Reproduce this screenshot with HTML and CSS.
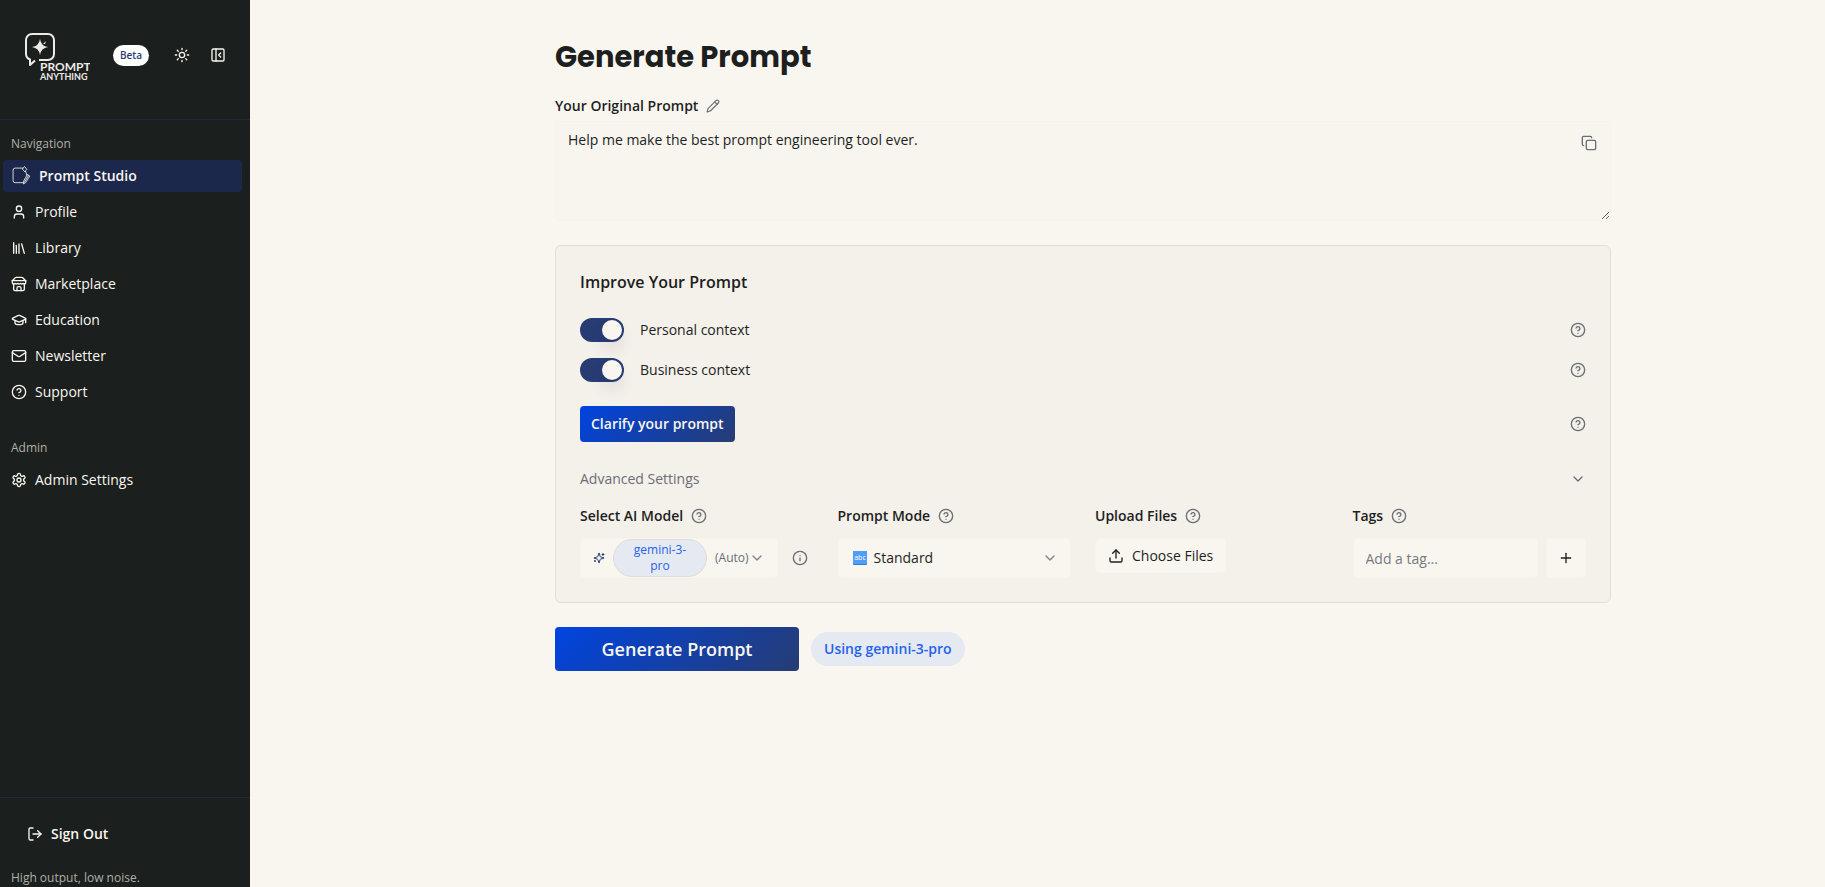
FILE: index.html
```
<!DOCTYPE html>
<html lang="en">

<head>
  <meta charset="utf-8" />
  <meta name="viewport" content="width=device-width, initial-scale=1" />
  <title>Generate Prompt</title>
  <link rel="stylesheet" href="styles.css">
</head>

<body>
  <!-- icon set -->
  <svg class="sprite" aria-hidden="true">
    <symbol id="i-help" viewBox="0 0 24 24"><circle cx="12" cy="12" r="10" /><path d="M9.09 9a3 3 0 0 1 5.83 1c0 2-3 3-3 3" /><path d="M12 17h.01" /></symbol>
    <symbol id="i-info" viewBox="0 0 24 24"><circle cx="12" cy="12" r="10" /><path d="M12 16v-4" /><path d="M12 8h.01" /></symbol>
    <symbol id="i-down" viewBox="0 0 24 24"><path d="m6 9 6 6 6-6" /></symbol>
    <symbol id="i-sun" viewBox="0 0 24 24"><circle cx="12" cy="12" r="4" /><path d="M12 2v2M12 20v2M4.93 4.93l1.41 1.41M17.66 17.66l1.41 1.41M2 12h2M20 12h2M6.34 17.66l-1.41 1.41M19.07 4.93l-1.41 1.41" /></symbol>
    <symbol id="i-panel" viewBox="0 0 24 24"><rect width="18" height="18" x="3" y="3" rx="2" /><path d="M9 3v18" /><path d="m16 15-3-3 3-3" /></symbol>
    <symbol id="i-studio" viewBox="0 0 24 24"><path d="M14 2.500H5a2.500 2.500 0 0 0-2.500 2.500v12.500A2.500 2.500 0 0 0 5 20h9.500" /><path d="m16.500 1 2.500 3-2.500 3-2.500-3z" /><path d="M17.500 6.500 19 11" /><path d="m20 10.500 2.500 1.500-5 8-2.500 1.500.2-3zM21 11.500l-5 8" /></symbol>
    <symbol id="i-user" viewBox="0 0 24 24"><path d="M19 21v-2a4 4 0 0 0-4-4H9a4 4 0 0 0-4 4v2" /><circle cx="12" cy="7" r="4" /></symbol>
    <symbol id="i-library" viewBox="0 0 24 24"><path d="m16 6 4 14" /><path d="M12 6v14" /><path d="M8 8v12" /><path d="M4 4v16" /></symbol>
    <symbol id="i-store" viewBox="0 0 24 24"><path d="m2 7 4.41-4.41A2 2 0 0 1 7.83 2h8.34a2 2 0 0 1 1.42.59L22 7" /><path d="M4 12v8a2 2 0 0 0 2 2h12a2 2 0 0 0 2-2v-8" /><path d="M15 22v-4a2 2 0 0 0-2-2h-2a2 2 0 0 0-2 2v4" /><path d="M2 7h20" /><path d="M22 7v3a2 2 0 0 1-2 2a2.7 2.7 0 0 1-1.59-.63.7.7 0 0 0-.82 0A2.7 2.7 0 0 1 16 12a2.7 2.7 0 0 1-1.59-.63.7.7 0 0 0-.82 0A2.7 2.7 0 0 1 12 12a2.7 2.7 0 0 1-1.59-.63.7.7 0 0 0-.82 0A2.7 2.7 0 0 1 8 12a2.7 2.7 0 0 1-1.59-.63.7.7 0 0 0-.82 0A2.7 2.7 0 0 1 4 12a2 2 0 0 1-2-2V7" /></symbol>
    <symbol id="i-cap" viewBox="0 0 24 24"><path d="M21.42 10.922a1 1 0 0 0-.019-1.838L12.83 5.18a2 2 0 0 0-1.66 0L2.6 9.08a1 1 0 0 0 0 1.832l8.57 3.908a2 2 0 0 0 1.66 0z" /><path d="M22 10v6" /><path d="M6 12.5V16a6 3 0 0 0 12 0v-3.5" /></symbol>
    <symbol id="i-mail" viewBox="0 0 24 24"><rect width="20" height="16" x="2" y="4" rx="2" /><path d="m22 7-8.97 5.7a1.94 1.94 0 0 1-2.06 0L2 7" /></symbol>
    <symbol id="i-gear" viewBox="0 0 24 24"><path d="M12.22 2h-.44a2 2 0 0 0-2 2v.18a2 2 0 0 1-1 1.73l-.43.25a2 2 0 0 1-2 0l-.15-.08a2 2 0 0 0-2.73.73l-.22.38a2 2 0 0 0 .73 2.73l.15.1a2 2 0 0 1 1 1.72v.51a2 2 0 0 1-1 1.74l-.15.09a2 2 0 0 0-.73 2.73l.22.38a2 2 0 0 0 2.73.73l.15-.08a2 2 0 0 1 2 0l.43.25a2 2 0 0 1 1 1.73V20a2 2 0 0 0 2 2h.44a2 2 0 0 0 2-2v-.18a2 2 0 0 1 1-1.73l.43-.25a2 2 0 0 1 2 0l.15.08a2 2 0 0 0 2.73-.73l.22-.39a2 2 0 0 0-.73-2.73l-.15-.08a2 2 0 0 1-1-1.74v-.5a2 2 0 0 1 1-1.74l.15-.09a2 2 0 0 0 .73-2.73l-.22-.38a2 2 0 0 0-2.73-.73l-.15.08a2 2 0 0 1-2 0l-.43-.25a2 2 0 0 1-1-1.73V4a2 2 0 0 0-2-2z" /><circle cx="12" cy="12" r="3" /></symbol>
    <symbol id="i-out" viewBox="0 0 24 24"><path d="M9 21H5a2 2 0 0 1-2-2V5a2 2 0 0 1 2-2h4" /><path d="m16 17 5-5-5-5" /><path d="M21 12H9" /></symbol>
    <symbol id="i-pencil" viewBox="0 0 24 24"><path d="M21.174 6.812a1 1 0 0 0-3.986-3.987L3.842 16.174a2 2 0 0 0-.5.83l-1.321 4.352a.5.5 0 0 0 .623.622l4.353-1.32a2 2 0 0 0 .83-.497z" /><path d="m15 5 4 4" /></symbol>
    <symbol id="i-copy" viewBox="0 0 24 24"><rect width="14" height="14" x="8" y="8" rx="2" /><path d="M4 16c-1.1 0-2-.9-2-2V4c0-1.1.9-2 2-2h10c1.1 0 2 .9 2 2" /></symbol>
    <symbol id="i-upload" viewBox="0 0 24 24"><path d="M21 15v4a2 2 0 0 1-2 2H5a2 2 0 0 1-2-2v-4" /><path d="m17 8-5-5-5 5" /><path d="M12 3v12" /></symbol>
    <symbol id="i-plus" viewBox="0 0 24 24"><path d="M5 12h14" /><path d="M12 5v14" /></symbol>
    <symbol id="i-sparkle" viewBox="0 0 24 24"><path d="M9.9 15.5A2 2 0 0 0 8.5 14.1l-6.1-1.6a.5.5 0 0 1 0-1L8.5 9.9A2 2 0 0 0 9.9 8.5l1.6-6.1a.5.5 0 0 1 1 0L14.1 8.5A2 2 0 0 0 15.5 9.9l6.1 1.6a.5.5 0 0 1 0 1L15.5 14.1a2 2 0 0 0-1.4 1.4l-1.6 6.1a.5.5 0 0 1-1 0z" /><path d="M20 3v4M22 5h-4M4 17v2M5 18H3" /></symbol>
  </svg>

  <div class="app">
    <aside class="sidebar">
      <div class="sidebar-head">
        <svg class="logo" viewBox="0 0 68 52" role="img" aria-label="Prompt Anything">
          <path class="logo-line" d="M17 31h9a6 6 0 0 0 6-6V11a6 6 0 0 0-6-6H10a6 6 0 0 0-6 6v14a6 6 0 0 0 4 5.500V36l5-4.500" />
          <path class="logo-fill" d="M18 10q1 7 8 8-7 1-8 8-1-7-8-8 7-1 8-8z" />
          <path class="logo-fill" d="m21 15 3-3-1 3z" />
          <text class="logo-big" x="18" y="42">PROMPT</text>
          <text class="logo-small" x="18" y="51">ANYTHING</text>
        </svg>
        <span class="beta">Beta</span>
        <button class="icon-btn" type="button" aria-label="Toggle theme"><svg class="icon"><use href="#i-sun" /></svg></button>
        <button class="icon-btn" type="button" aria-label="Collapse sidebar"><svg class="icon"><use href="#i-panel" /></svg></button>
      </div>

      <nav class="nav">
        <p class="nav-title">Navigation</p>
        <a class="nav-link active" href="#"><svg class="icon icon-studio"><use href="#i-studio" /></svg>Prompt Studio</a>
        <a class="nav-link" href="#"><svg class="icon"><use href="#i-user" /></svg>Profile</a>
        <a class="nav-link" href="#"><svg class="icon"><use href="#i-library" /></svg>Library</a>
        <a class="nav-link" href="#"><svg class="icon"><use href="#i-store" /></svg>Marketplace</a>
        <a class="nav-link" href="#"><svg class="icon"><use href="#i-cap" /></svg>Education</a>
        <a class="nav-link" href="#"><svg class="icon"><use href="#i-mail" /></svg>Newsletter</a>
        <a class="nav-link" href="#"><svg class="icon"><use href="#i-help" /></svg>Support</a>
        <p class="nav-title nav-title-admin">Admin</p>
        <a class="nav-link" href="#"><svg class="icon"><use href="#i-gear" /></svg>Admin Settings</a>
      </nav>

      <div class="sidebar-foot">
        <button class="sign-out" type="button"><svg class="icon"><use href="#i-out" /></svg>Sign Out</button>
        <p class="tagline">High output, low noise.</p>
      </div>
    </aside>

    <main class="main">
      <div class="content">
        <h1 class="title">Generate Prompt</h1>

        <div class="label-row">
          <label class="label" for="prompt">Your Original Prompt</label>
          <button class="icon-btn muted" type="button" aria-label="Edit prompt"><svg class="icon icon-sm"><use href="#i-pencil" /></svg></button>
        </div>
        <div class="prompt-wrap">
          <textarea class="prompt" id="prompt">Help me make the best prompt engineering tool ever.</textarea>
          <button class="icon-btn muted copy" type="button" aria-label="Copy prompt"><svg class="icon"><use href="#i-copy" /></svg></button>
        </div>

        <section class="card">
          <h2 class="card-title">Improve Your Prompt</h2>

          <div class="toggle-row">
            <input class="switch" type="checkbox" id="personal" checked />
            <label class="toggle-label" for="personal">Personal context</label>
            <button class="icon-btn muted" type="button" aria-label="About personal context"><svg class="icon"><use href="#i-help" /></svg></button>
          </div>
          <div class="toggle-row">
            <input class="switch" type="checkbox" id="business" checked />
            <label class="toggle-label" for="business">Business context</label>
            <button class="icon-btn muted" type="button" aria-label="About business context"><svg class="icon"><use href="#i-help" /></svg></button>
          </div>

          <div class="clarify-row">
            <button class="btn-primary clarify" type="button">Clarify your prompt</button>
            <button class="icon-btn muted" type="button" aria-label="About clarifying"><svg class="icon"><use href="#i-help" /></svg></button>
          </div>

          <button class="advanced" type="button">Advanced Settings<svg class="icon"><use href="#i-down" /></svg></button>

          <div class="settings">
            <div class="setting">
              <div class="label-row">
                <span class="label">Select AI Model</span>
                <button class="icon-btn muted" type="button" aria-label="About models"><svg class="icon"><use href="#i-help" /></svg></button>
              </div>
              <div class="field-row model-row">
                <button class="field model" type="button">
                  <svg class="icon icon-spark"><use href="#i-sparkle" /></svg>
                  <span class="model-name">gemini-3-pro</span>
                  <span class="model-auto">(Auto)</span>
                  <svg class="icon icon-down"><use href="#i-down" /></svg>
                </button>
                <button class="icon-btn muted" type="button" aria-label="Model details"><svg class="icon"><use href="#i-info" /></svg></button>
              </div>
            </div>

            <div class="setting">
              <div class="label-row">
                <label class="label" for="mode">Prompt Mode</label>
                <button class="icon-btn muted" type="button" aria-label="About modes"><svg class="icon"><use href="#i-help" /></svg></button>
              </div>
              <div class="field mode">
                <svg class="abc" viewBox="0 0 14 14" aria-hidden="true">
                  <rect class="abc-edge" width="14" height="14" rx="1" />
                  <rect class="abc-face" width="14" height="13" rx="1" />
                  <text class="abc-text" x="7" y="9">abc</text>
                </svg>
                <select class="mode-select" id="mode">
                  <option>Standard</option>
                </select>
                <svg class="icon icon-down"><use href="#i-down" /></svg>
              </div>
            </div>

            <div class="setting">
              <div class="label-row">
                <span class="label">Upload Files</span>
                <button class="icon-btn muted" type="button" aria-label="About uploads"><svg class="icon"><use href="#i-help" /></svg></button>
              </div>
              <input class="file-input" type="file" id="files" multiple />
              <label class="field choose" for="files"><svg class="icon"><use href="#i-upload" /></svg>Choose Files</label>
            </div>

            <div class="setting">
              <div class="label-row">
                <label class="label" for="tag">Tags</label>
                <button class="icon-btn muted" type="button" aria-label="About tags"><svg class="icon"><use href="#i-help" /></svg></button>
              </div>
              <div class="field-row">
                <input class="field tag-input" type="text" id="tag" placeholder="Add a tag..." />
                <button class="field add" type="button" aria-label="Add tag"><svg class="icon"><use href="#i-plus" /></svg></button>
              </div>
            </div>
          </div>
        </section>

        <div class="actions">
          <button class="btn-primary generate" type="button">Generate Prompt</button>
          <span class="using">Using gemini-3-pro</span>
        </div>
      </div>
    </main>
  </div>
</body>

</html>
```
FILE: styles.css
```
* {
  box-sizing: border-box;
}

body {
  margin: 0;
  background-color: #f9f6ef;
  color: #1c1f1e;
  font-family: "Open Sans", "Noto Sans", sans-serif;
  font-size: 14px;
  line-height: 20px;
}

h1,
h2,
p {
  margin: 0;
}

button,
input,
select,
textarea {
  margin: 0;
  font: inherit;
  color: inherit;
}

button {
  cursor: pointer;
}

.sprite {
  position: absolute;
  width: 0;
  height: 0;
}

.icon {
  flex: none;
  width: 16px;
  height: 16px;
  fill: none;
  stroke: currentColor;
  stroke-width: 2;
  stroke-linecap: round;
  stroke-linejoin: round;
}

.icon-btn {
  display: flex;
  padding: 0;
  border: 0;
  background: none;
}

.muted {
  color: #6b6e75;
}

.app {
  display: flex;
  min-height: 100vh;
}

/* sidebar */
.sidebar {
  position: sticky;
  top: 0;
  display: flex;
  flex: none;
  flex-direction: column;
  width: 250px;
  height: 100vh;
  background-color: #1b1f1d;
  color: #f9f6ef;
}

.sidebar-head {
  display: flex;
  align-items: center;
  height: 120px;
  padding: 0 24px 9px 22px;
  border-bottom: 1px solid #222838;
}

.logo {
  width: 68px;
  height: 52px;
}

.logo-line {
  fill: none;
  stroke: #ecebe8;
  stroke-width: 2;
  stroke-linejoin: round;
}

.logo-fill {
  fill: #ecebe8;
}

.logo-big,
.logo-small {
  fill: #ecebe8;
  font-family: Lato, sans-serif;
  font-weight: 700;
}

.logo-big {
  font-size: 12px;
}

.logo-small {
  font-size: 9px;
}

.beta {
  margin: 0 25px 0 auto;
  padding: 2px 7px;
  border-radius: 11px;
  background-color: #fff;
  color: #263c73;
  font-size: 10px;
  font-weight: 600;
  line-height: 17px;
}

.sidebar-head .icon-btn + .icon-btn {
  margin-left: 20px;
}

.nav {
  flex: 1;
  padding: 12px 8px 0 3px;
}

.nav-title {
  margin-bottom: 4px;
  padding: 4px 8px;
  color: #b0afa9;
  font-size: 12px;
  line-height: 16px;
}

.nav-title-admin {
  margin-top: 28px;
}

.nav-link {
  display: flex;
  align-items: center;
  gap: 8px;
  height: 32px;
  margin-bottom: 4px;
  padding: 0 8px;
  border-radius: 4px;
  color: #f9f6ef;
  font-weight: 500;
  text-decoration: none;
}

.active {
  background-color: #1b274b;
  font-weight: 600;
}

.icon-studio {
  width: 20px;
  height: 20px;
  stroke-width: 1;
}

.sidebar-foot {
  padding: 20px 11px 0;
  border-top: 1px solid #222838;
}

.sign-out {
  display: flex;
  align-items: center;
  gap: 8px;
  height: 32px;
  padding: 0 16px;
  border: 0;
  background: none;
  font-weight: 600;
}

.tagline {
  padding: 19px 0 0;
  color: #b0afa9;
  font-size: 12px;
  line-height: 18px;
}

/* page */
.main {
  flex: 1;
  padding: 36px 48px 36px 139px;
}

.content {
  max-width: 1056px;
  margin: 0 auto;
}

.title {
  margin-bottom: 18px;
  font-family: Poppins, Inter, sans-serif;
  font-size: 29px;
  font-weight: 700;
  line-height: 42px;
}

.label-row {
  display: flex;
  align-items: center;
  gap: 8px;
}

.label {
  font-weight: 600;
}

.icon-sm {
  width: 14px;
  height: 14px;
}

.prompt-wrap {
  position: relative;
  margin-top: 5px;
}

.prompt {
  display: block;
  width: 100%;
  height: 100px;
  padding: 8px 48px 8px 12px;
  border: 1px solid #f5f3ee;
  border-radius: 4px;
  background-color: #f8f5ee;
  resize: vertical;
}

.copy {
  position: absolute;
  top: 14px;
  right: 14px;
}

/* improve card */
.card {
  margin-top: 24px;
  padding: 24px;
  border: 1px solid #e2dfd9;
  border-radius: 6px;
  background-color: #f4f0ea;
}

.card-title {
  margin-bottom: 24px;
  font-size: 16px;
  font-weight: 600;
  line-height: 24px;
}

.toggle-row {
  display: flex;
  align-items: center;
  gap: 16px;
  margin-bottom: 16px;
}

.toggle-row .icon-btn,
.clarify-row .icon-btn {
  margin-left: auto;
}

.switch {
  appearance: none;
  display: flex;
  align-items: center;
  justify-content: flex-end;
  width: 44px;
  height: 24px;
  padding: 2px;
  border-radius: 12px;
  background-color: #263c73;
  cursor: pointer;
}

.switch::before {
  content: "";
  width: 20px;
  height: 20px;
  border-radius: 10px;
  background-color: #f9f6ef;
  box-shadow: 0 10px 15px rgba(38, 30, 60, 0.1);
}

.switch:not(:checked) {
  justify-content: flex-start;
  background-color: #c9c7c1;
}

.clarify-row {
  display: flex;
  align-items: center;
  margin-top: 24px;
}

.btn-primary {
  border: 0;
  border-radius: 4px;
  background-image: linear-gradient(135deg, #0044e0, #263c73);
  color: #f9f6ef;
  font-weight: 600;
}

.clarify {
  height: 36px;
  padding: 0 11px;
}

.advanced {
  display: flex;
  align-items: center;
  justify-content: space-between;
  width: 100%;
  margin: 24px 0 14px;
  padding: 3px 0;
  border: 0;
  background: none;
  color: #6b6e75;
}

/* advanced settings */
.settings {
  display: grid;
  grid-template-columns: repeat(4, minmax(0, 1fr));
  gap: 24px;
}

.settings .label-row {
  margin-bottom: 12px;
}

.field-row {
  display: flex;
  gap: 8px;
}

.field {
  height: 40px;
  border: 1px solid #f6f4ee;
  border-radius: 4px;
  background-color: #f9f6ef;
}

.model-row {
  align-items: center;
  gap: 14px;
}

.model {
  display: flex;
  align-items: center;
  width: 198px;
  padding: 0 12px;
}

.icon-spark {
  width: 12px;
  height: 12px;
  margin-right: 8px;
  color: #263c73;
}

.model-name {
  width: 94px;
  margin-right: 8px;
  padding: 2px 16px;
  border: 1px solid #e0ddd8;
  border-radius: 19px;
  background-color: #e5e9f1;
  color: #2563eb;
  font-size: 12px;
  font-weight: 500;
  line-height: 16px;
}

.model-auto {
  color: #6b6e75;
  font-size: 12px;
}

.icon-down {
  color: #808289;
}

.mode {
  display: flex;
  align-items: center;
  padding: 0 12px 0 14px;
}

.abc {
  flex: none;
  width: 14px;
  height: 14px;
}

.abc-edge {
  fill: #3a78d8;
}

.abc-face {
  fill: #4f9df5;
}

.abc-text {
  fill: #fff;
  font-family: "Open Sans", sans-serif;
  font-size: 7px;
  text-anchor: middle;
}

.mode-select {
  flex: 1;
  appearance: none;
  padding: 0 7px;
  border: 0;
  background: none;
}

.file-input {
  position: absolute;
  width: 1px;
  height: 1px;
  opacity: 0;
}

.choose {
  display: inline-flex;
  align-items: center;
  gap: 8px;
  height: 35px;
  padding: 0 12px;
  font-weight: 500;
  cursor: pointer;
}

.tag-input {
  flex: 1;
  min-width: 0;
  padding: 0 12px;
}

.tag-input::placeholder {
  color: #77797f;
}

.add {
  display: flex;
  flex: none;
  align-items: center;
  justify-content: center;
  width: 40px;
  padding: 0;
}

/* bottom actions */
.actions {
  display: flex;
  align-items: center;
  gap: 12px;
  margin-top: 24px;
}

.generate {
  width: 244px;
  height: 44px;
  font-size: 18px;
}

.using {
  padding: 7px 13px;
  border-radius: 17px;
  background-color: #e5e9f1;
  color: #2563eb;
  font-weight: 600;
}
```
